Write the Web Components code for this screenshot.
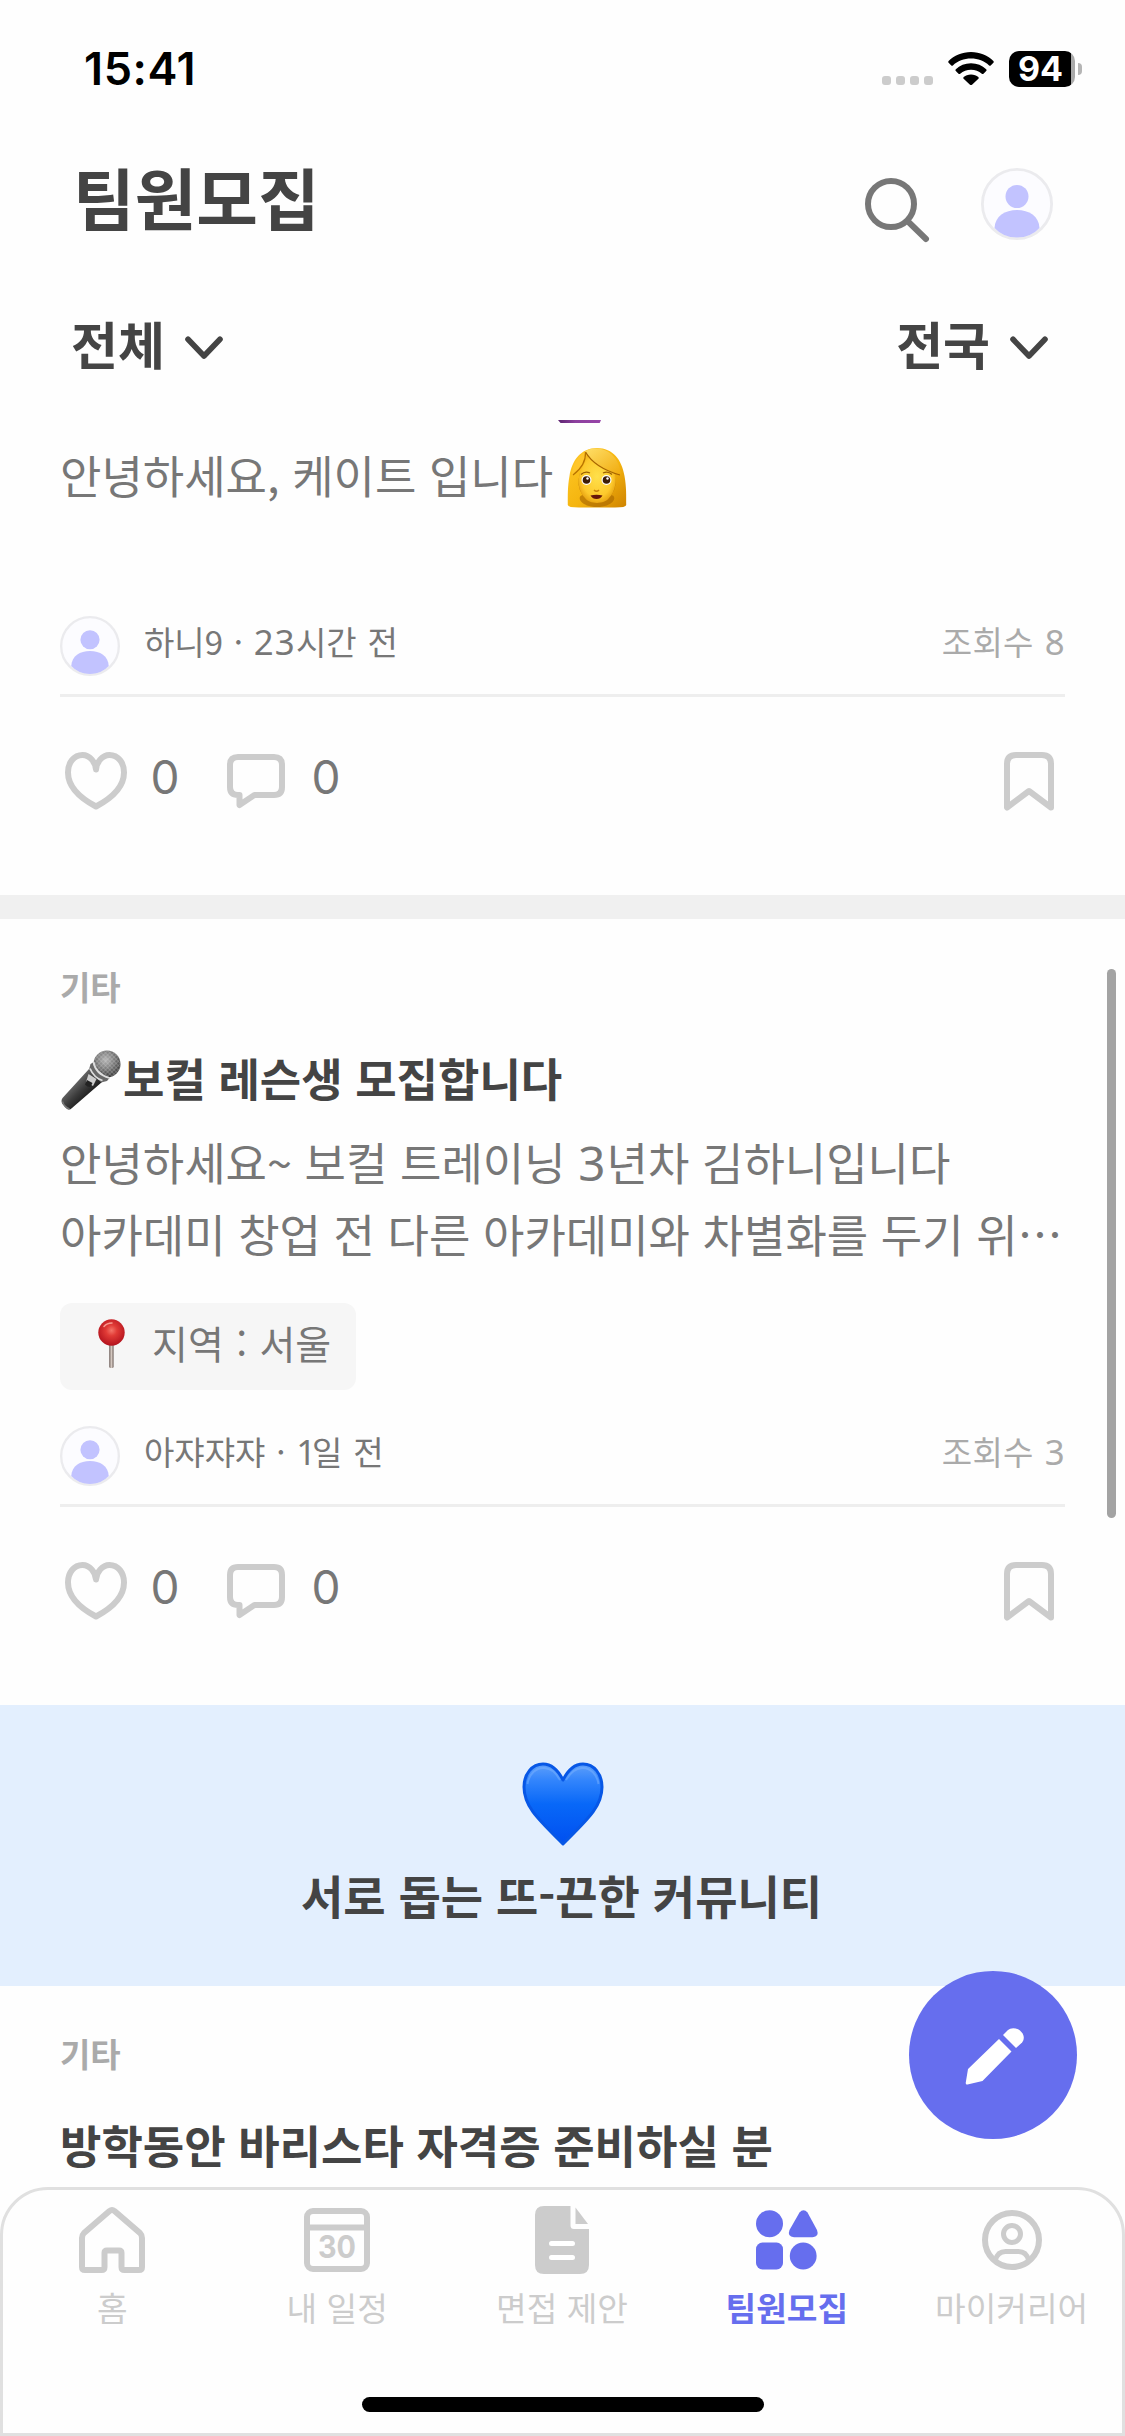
<!DOCTYPE html>
<html lang="ko">
<head>
<meta charset="utf-8">
<title>팀원모집</title>
<style>
  html, body { margin: 0; padding: 0; background: #fefefe; }
  body { width: 1125px; height: 2436px; overflow: hidden; font-family: "Noto Sans CJK KR", sans-serif; color: #444; }
</style>
</head>
<body>
<recruit-app></recruit-app>
<script>
const define = (name, html, setup) => {
  const tpl = document.createElement('template');
  tpl.innerHTML = html;
  customElements.define(name, class extends HTMLElement {
    constructor() {
      super();
      this.attachShadow({ mode: 'open' }).append(tpl.content.cloneNode(true));
    }
    connectedCallback() { if (setup) setup.call(this, this.shadowRoot); }
  });
};

const ICONS = {
  dots: [51, 9, '<g fill="#ccc"><rect width="9" height="9" rx="3"/><rect x="14" width="9" height="9" rx="3"/><rect x="28" width="9" height="9" rx="3"/><rect x="42" width="9" height="9" rx="3"/></g>'],
  wifi: [46, 33, '<g fill="#000"><path d="M23 0C14 0 6 3.500 .6 8.900q-.9.900 0 1.800L3.300 13.400q.8.800 1.600 0C9.600 9 16 6.600 23 6.600S36.400 9 41.100 13.400q.8.800 1.600 0L45.400 10.700q.9-.9 0-1.800C40 3.500 32 0 23 0Z"/><path d="M23 11.300c-6 0-11.300 2.200-15.200 5.900q-.9.900 0 1.800l2.700 2.700q.8.800 1.700 0C15.100 19.200 18.900 17.800 23 17.800s7.900 1.400 10.800 3.900q.9.800 1.700 0l2.700-2.700q.9-.9 0-1.800C34.300 13.500 29 11.300 23 11.300Z"/><path d="M23 22.500c-3 0-5.500 1-7.300 2.500q-1 .9-.1 1.800l6.400 5.900q1 .7 2 0l6.400-5.900q.9-.9-.1-1.800C28.500 23.500 26 22.500 23 22.500Z"/></g>'],
  search: [66, 66, '<g fill="none" stroke="#777" stroke-linecap="round"><circle cx="26" cy="26" r="23" stroke-width="6"/><path d="M43 43.500 61 61" stroke-width="6"/></g>'],
  chevron: [38, 24, '<path d="M3 3.300 19 20 35 3.300" fill="none" stroke="#444" stroke-width="5.600" stroke-linecap="round" stroke-linejoin="round"/>'],
  like: [62, 58, '<path d="M31 17.500C30.500 10.500 25 3 17.500 3 9 3 3 10.500 3 20.500 3 34 14 45.500 31 54.500 48 45.500 59 34 59 20.500 59 10.500 53 3 44.500 3 37 3 31.500 10.500 31 17.500Z" fill="none" stroke="#ccc" stroke-width="6" stroke-linejoin="round"/>'],
  comment: [58, 54, '<path d="M11 3H47Q55 3 55 11V33Q55 41 47 41H27.500L12.500 51V41H11Q3 41 3 33V11Q3 3 11 3Z" fill="none" stroke="#ccc" stroke-width="6" stroke-linejoin="round"/>'],
  bookmark: [50, 59, '<path d="M12 3H38Q47 3 47 12V55.500L25 39 3 55.500V12Q3 3 12 3Z" fill="none" stroke="#ccc" stroke-width="6" stroke-linejoin="round"/>'],
  pencil: [60, 60, '<g fill="#fff"><path d="M34 13 46.500 25.500 17.500 55 2.500 58.500Q.8 59 .7 57L3 43Z"/><path d="M38 9 42.500 4.500C50-3 65 9 56 17.500L51 22Z"/></g>'],
  home: [66, 66, '<path d="M6 63Q3 63 3 60V31Q3 28 5 26L30.500 4Q33 2 35.500 4L61 26Q63 28 63 31V60Q63 63 60 63H45.500Q42.500 63 42.500 60V46Q42.500 43.500 40 43.500H28Q25.500 43.500 25.500 46V60Q25.500 63 22.500 63Z" fill="none" stroke="#ccc" stroke-width="6" stroke-linejoin="round"/>'],
  calendar: [66, 64, '<rect x="3" y="3" width="60" height="58" rx="6" fill="none" stroke="#ccc" stroke-width="6"/><path d="M3 19.500H63" stroke="#ccc" stroke-width="6"/><text x="33" y="49.500" text-anchor="middle" textLength="38" lengthAdjust="spacingAndGlyphs" font-family="Inter, sans-serif" font-weight="700" font-size="31" fill="#ccc">30</text>'],
  document: [54, 68, '<path d="M9 0H35.500V19.500Q35.500 23 39 23H54V59Q54 68 45 68H9Q0 68 0 59V9Q0 0 9 0Z" fill="#ccc"/><path d="M40.500 1.500 53 18H40.500Z" fill="#ccc"/><path d="M16.500 37.500H37.500M16.500 51.500H37.500" stroke="#fff" stroke-width="5" stroke-linecap="round"/>'],
  shapes: [62, 60, '<g fill="#666eee"><circle cx="13.500" cy="13.700" r="13.500"/><path d="M43.500 2.500Q47.500-2 51.500 2.500L61 20Q63.500 26.800 56.500 27.200H38Q31 26.800 33.500 20Z"/><rect y="32.500" width="27" height="27" rx="6.500"/><circle cx="47.200" cy="46" r="13.400"/></g>'],
  person: [60, 60, '<g fill="none" stroke="#ccc"><circle cx="30" cy="30" r="27" stroke-width="6"/><circle cx="30" cy="24" r="8.500" stroke-width="5"/><path d="M13.500 50C15 44 18 41.500 23.500 41.500H36.500C42 41.500 45 44 46.500 50" stroke-width="5"/></g>'],
  blueheart: [82, 84, '<defs><linearGradient id="b" x1="0" y1="0" x2="0" y2="1"><stop offset="0" stop-color="#5fa0fa"/><stop offset=".2" stop-color="#3385fc"/><stop offset=".5" stop-color="#0868f8"/><stop offset="1" stop-color="#004ff0"/></linearGradient></defs><path d="M41 18C36 8 29 2 21 2 10 2 2 12 2 25 2 45 17 58 41 82 65 58 80 45 80 25 80 12 72 2 61 2 53 2 46 8 41 18Z" fill="url(#b)" stroke="#0757e6" stroke-width="3" stroke-linejoin="round"/><path d="M5.500 22C7 12 14 5.500 22 6 30 6.500 34 11 38 18" fill="none" stroke="#80b5ff" stroke-width="2" opacity=".45"/><path d="M44 18C48 11 53 6.500 60 6 68 5.500 75 12 76.500 22" fill="none" stroke="#80b5ff" stroke-width="2" opacity=".45"/>'],
  pin: [27, 50, '<defs><radialGradient id="r" cx=".5" cy=".42" r=".6"><stop offset="0" stop-color="#f47468"/><stop offset=".35" stop-color="#e13b36"/><stop offset="1" stop-color="#b0101c"/></radialGradient><linearGradient id="n"><stop offset="0" stop-color="#6d5f5a"/><stop offset=".5" stop-color="#d8ccc4"/><stop offset="1" stop-color="#6d5f5a"/></linearGradient></defs><rect x="11.200" y="24" width="4.400" height="25" rx="1.500" fill="url(#n)"/><circle cx="13.500" cy="13.500" r="13.200" fill="url(#r)"/><path d="M6 7.500Q9 4 14 4" fill="none" stroke="#ffb3a6" stroke-width="1.500" stroke-linecap="round" opacity=".8"/>'],
  mic: [60, 60, '<defs><linearGradient id="m" x1="0" y1="0" x2="1" y2="1"><stop offset=".3" stop-color="#6e6e6e"/><stop offset=".5" stop-color="#3c3c3c"/><stop offset=".7" stop-color="#161616"/></linearGradient><radialGradient id="h" cx=".45" cy=".35" r=".7"><stop offset="0" stop-color="#b5b5b5"/><stop offset=".5" stop-color="#777"/><stop offset="1" stop-color="#2c2c2c"/></radialGradient><pattern id="g" width="3" height="3" patternUnits="userSpaceOnUse" patternTransform="rotate(45)"><path d="M0 0H3M0 0V3" stroke="#ddd" stroke-width=".8" opacity=".6"/></pattern></defs><path d="M28 19 41 32 11 58Q8 61 5 58L1.500 54Q-.5 51 1.500 48Z" fill="url(#m)"/><path d="M1.500 51.500Q3 57 8.500 59" fill="none" stroke="#777" stroke-width="1.500"/><circle cx="46" cy="14" r="13.500" fill="url(#h)"/><circle cx="46" cy="14" r="13.500" fill="url(#g)"/><path d="M32 12.500Q34 24 48.500 28L46 31 40 32.500 28 19.500 29.500 14Z" fill="#686868"/><path d="M32.500 12Q34.500 24 48.500 28M29 18.500Q33 28 41.500 30.500" fill="none" stroke="#ddd" stroke-width="1.800"/><path d="M27.500 24 35.500 29 32 36 25 32Z" fill="#ccc"/><path d="M26 30 31.500 33 29.500 37Q26 37 24 34.500Z" fill="#222"/>'],
  woman: [60, 60, '<defs><linearGradient id="w" x1="0" y1="0" x2="1" y2="1"><stop offset="0" stop-color="#ffc928"/><stop offset=".55" stop-color="#f5b50f"/><stop offset="1" stop-color="#cf8300"/></linearGradient><radialGradient id="f" cx=".5" cy=".45" r=".6"><stop offset="0" stop-color="#ffe04b"/><stop offset=".7" stop-color="#fdc92c"/><stop offset="1" stop-color="#e39a0b"/></radialGradient><linearGradient id="t" x1="0" y1="0" x2="1" y2="1"><stop offset="0" stop-color="#ffdf68"/><stop offset="1" stop-color="#f0aa0c"/></linearGradient></defs><path d="M30 0C14 0 5 12 2.500 28 .5 39 .8 48 .8 57Q1 59.500 12 59.500H48Q59 59.500 59.200 57C59.200 48 59.500 39 57.500 28 55 12 46 0 30 0Z" fill="url(#w)"/><path d="M13 25Q9 38 15.500 47C9 49 14 59 30 59S51 49 44.500 47Q51 38 47 25Z" fill="#a96700" opacity=".65"/><path d="M14 22C10 31 11 43 18 50 23 56.500 37 56.500 42 50 49 43 50 31 47 23 35 22 26 14 20 7 18 14 16 18 14 22Z" fill="url(#f)"/><path d="M18 3.500C26 17 39 22 54 27 53 13 44 1 30 .5 25 .3 21 1.500 18 3.500Z" fill="url(#t)"/><path d="M18.500 4C18 16 11 22 5 27 5 18 10 8 18.500 4Z" fill="#ffc62b"/><path d="M18.500 4C26 17 39 23 53 27" fill="none" stroke="#a86500" stroke-width="1.300"/><path d="M18.500 4C19 14 14 21 6 27" fill="none" stroke="#b87300" stroke-width="1.200"/><ellipse cx="19.500" cy="32" rx="5" ry="5" fill="#fff"/><ellipse cx="39.500" cy="32" rx="5" ry="5" fill="#fff"/><circle cx="19.500" cy="32" r="3.800" fill="#3d1e08"/><circle cx="39.500" cy="32" r="3.800" fill="#3d1e08"/><circle cx="20.500" cy="30.500" r="1.200" fill="#fff"/><circle cx="40.500" cy="30.500" r="1.200" fill="#fff"/><path d="M14 26.500Q18 22.500 23 25M36 25Q41 22.500 45 26.500" fill="none" stroke="#9a6000" stroke-width="1.300"/><path d="M27 42Q29.500 44.500 32 42" fill="none" stroke="#c7830b" stroke-width="1.500"/><path d="M23.500 47.500Q29.500 46.200 35.500 47.500 33.500 51 29.500 51T23.500 47.500Z" fill="#66160a"/>']
};

define('ui-icon', '<style>:host{display:block;flex:none}svg{display:block;overflow:visible}</style><div></div>', function (root) {
  const [w, h, body] = ICONS[this.getAttribute('name')];
  root.querySelector('div').innerHTML = `<svg width="${w}" height="${h}" viewBox="0 0 ${w} ${h}" aria-hidden="true">${body}</svg>`;
});

define('user-avatar', `
  <style>:host{display:block;flex:none;width:60px;height:60px}svg{display:block;width:100%;height:100%}</style>
  <svg viewBox="0 0 72 72"><clipPath id="c"><circle cx="36" cy="36" r="34"/></clipPath>
  <circle cx="36" cy="36" r="34.600" fill="#fcfcff" stroke="#ebebee" stroke-width="2.800"/>
  <g fill="#c2c3ff" clip-path="url(#c)"><circle cx="36" cy="28.500" r="11.500"/><path d="M13.500 60C14 48 24 42 36 42S58 48 58.500 60Q50 69.500 36 69.500T13.500 60Z"/></g></svg>`);

define('status-bar', `
  <style>
    :host{display:flex;height:138px;box-sizing:border-box;padding:46px 43px 0 84px;align-items:flex-start;justify-content:space-between;font-family:Inter,sans-serif;color:#000}
    .time{font-size:45px;font-weight:600;line-height:46px;letter-spacing:.6px}
    .right{display:flex;align-items:flex-start}
    .dots{padding-top:30px;margin-right:15px}.wifi{padding-top:6px;margin-right:15px}
    .battery{margin-top:5px;width:66px;height:36px;border-radius:10px;background:linear-gradient(90deg,#000 62px,#aaa 62px);color:#fff;font-size:34px;line-height:36px;font-weight:700;text-align:center;text-indent:-3px}
    .nub{margin:17px 0 0 3px;width:4px;height:12px;border-radius:0 4px 4px 0;background:#b5b5b5}
  </style>
  <div class="time">15:41</div>
  <div class="right"><ui-icon class="dots" name="dots"></ui-icon><ui-icon class="wifi" name="wifi"></ui-icon><div class="battery">94</div><div class="nub"></div></div>`);

define('page-header', `
  <style>
    :host{display:flex;height:132px;box-sizing:border-box;padding:0 72px 0 73px;justify-content:space-between}
    h1{margin:0;padding-top:10px;font-size:67px;line-height:96px;font-weight:700;white-space:nowrap}
    .tools{display:flex;padding-top:30px}
    ui-icon{margin:10px 50px 0 0}user-avatar{width:72px;height:72px}
  </style>
  <h1><slot></slot></h1>
  <div class="tools"><ui-icon name="search"></ui-icon><user-avatar></user-avatar></div>`);

define('filter-bar', `
  <style>:host{display:flex;height:150px;box-sizing:border-box;padding:35px 77px 0 71px;justify-content:space-between}</style><slot></slot>`);
define('filter-select', `
  <style>:host{display:flex;height:76px;font-size:51px;line-height:76px;font-weight:700;gap:20px}ui-icon{margin-top:31px}</style>
  <span><slot></slot></span><ui-icon name="chevron"></ui-icon>`);

define('region-chip', `
  <style>:host{display:flex;box-sizing:border-box;width:296px;height:87px;margin-top:33px;border-radius:12px;background:#f6f6f6;padding-left:38px;font-size:39px;line-height:78px;color:#777;white-space:nowrap;word-spacing:1.500px}
  ui-icon{margin:16px 27px 0 0}</style><ui-icon name="pin"></ui-icon><slot></slot>`);

define('num-text', `
  <style>:host{font-family:"Noto Sans",sans-serif;font-size:1.055em;line-height:0}:host([narrow]){letter-spacing:-4px}:host([wide]){letter-spacing:1.200px}</style><slot></slot>`);

define('post-meta', `
  <style>:host{display:flex;height:81px;box-sizing:border-box;border-bottom:3px solid #eee;font-size:33px;line-height:50px;color:#777;word-spacing:1.500px;white-space:nowrap}
  .who{margin-left:24px;flex:1}.views{color:#aaa;letter-spacing:.3px}</style>
  <user-avatar></user-avatar><div class="who"><slot></slot></div><div class="views"><slot name="views"></slot></div>`);

define('post-actions', `
  <style>:host{display:flex;height:198px;box-sizing:border-box;padding:55px 11px 0 5px;font-size:46px;line-height:50px;color:#777;font-family:Inter,sans-serif}
  span{width:26px;display:flex;justify-content:center}.n1{margin:0 49px 0 25px}.n2{margin:0 auto 0 28px}.c{margin-top:2px}</style>
  <ui-icon name="like"></ui-icon><span class="n1">0</span><ui-icon class="c" name="comment"></ui-icon><span class="n2">0</span><ui-icon name="bookmark"></ui-icon>`);

define('post-card', `
  <style>:host{display:block;padding:0 60px}
  .cat{font-size:33px;line-height:50px;font-weight:700;color:#aaa}
  .title{font-size:45px;line-height:66px;font-weight:700;white-space:nowrap}
  .text{font-size:45px;line-height:72px;color:#777;white-space:nowrap}
  ::slotted([slot=cat]){display:block;padding-top:42px}
  ::slotted([slot=title]){display:flex;margin-top:34px;align-items:flex-start}</style>
  <div class="cat"><slot name="cat"></slot></div>
  <div class="title"><slot name="title"></slot></div>
  <div class="text"><slot name="text"></slot></div>
  <slot></slot>`);

define('community-banner', `
  <style>:host{display:flex;flex-direction:column;align-items:center;height:281px;box-sizing:border-box;padding-top:57px;background:#e3effe;font-size:46px;font-weight:700;line-height:70px;white-space:nowrap}
  div{margin:13px 2px 0 0}</style><ui-icon name="blueheart"></ui-icon><div><slot></slot></div>`);

define('write-button', `
  <style>:host{position:absolute;left:909px;top:1971px;width:168px;height:168px;border-radius:50%;background:#666eee;display:flex;align-items:center;justify-content:center}
  ui-icon{margin:2px 0 0 4px}</style><ui-icon name="pencil"></ui-icon>`);

define('nav-item', `
  <style>:host{display:flex;flex-direction:column;align-items:center;flex:1;font-size:33.300px;line-height:48px;color:#ccc;font-weight:400;white-space:nowrap}
  :host([active]){color:#666eee;font-weight:700}
  .i{height:72px;display:flex;align-items:center;margin-bottom:7px}</style>
  <div class="i"></div><slot></slot>`, function (root) {
  const icon = document.createElement('ui-icon');
  icon.setAttribute('name', this.getAttribute('icon'));
  root.querySelector('.i').replaceChildren(icon);
});

define('bottom-nav', `
  <style>:host{display:flex;flex-direction:column;align-items:center;box-sizing:border-box;height:249px;border:3px solid #e0e0e0;border-radius:48px 48px 0 0;background:#fefefe;flex:none}
  nav{display:flex;width:1125px;height:207px;box-sizing:border-box;padding:14px 1px 0 0}
  .bar{width:402px;height:15px;border-radius:8px;background:#000}</style>
  <nav><slot></slot></nav><div class="bar"></div>`);

customElements.define('recruit-app', class extends HTMLElement {
  constructor() {
    super();
    this.attachShadow({ mode: 'open' }).innerHTML = `
    <style>
      :host{display:flex;flex-direction:column;position:relative;width:1125px;height:2436px;overflow:hidden}
      .feed{height:1767px;overflow:hidden}
      .sep{height:24px;background:#f0f0f0}
      .peek{height:3px;padding-left:498px}.peek i{display:block;width:43px;height:3px;background:linear-gradient(90deg,#5d2470,#8c409e 40%,#9745a8);clip-path:polygon(0 0,100% 0,97% 100%,6% 100%)}
      .hello{display:flex;padding-top:16px;margin-bottom:105px}
      .hello ui-icon{margin:9px 0 0 14px}
      .title ui-icon{margin:5px 2px 0 1px}
      .intro{padding-top:15px}
      .m2{margin-top:36px}
      .thumb{position:absolute;left:1107px;top:969px;width:9px;height:549px;border-radius:5px;background:#a3a3a3}
      p{margin:0}
    </style>
    <status-bar></status-bar>
    <page-header>팀원모집</page-header>
    <filter-bar><filter-select>전체</filter-select><filter-select>전국</filter-select></filter-bar>
    <div class="feed">
      <post-card>
        <div slot="text"><div class="peek"><i></i></div><div class="hello"><span>안녕하세요, 케이트 입니다</span><ui-icon name="woman"></ui-icon></div></div>
        <post-meta>하니9 · <num-text wide>23</num-text>시간 전<span slot="views">조회수 <num-text>8</num-text></span></post-meta>
        <post-actions></post-actions>
      </post-card>
      <div class="sep"></div>
      <post-card>
        <span slot="cat">기타</span>
        <div slot="title" class="title"><ui-icon name="mic"></ui-icon><span>보컬 레슨생 모집합니다</span></div>
        <div slot="text" class="intro"><p>안녕하세요~ 보컬 트레이닝 <num-text wide>3</num-text>년차 김하니입니다</p><p>아카데미 창업 전 다른 아카데미와 차별화를 두기 위…</p></div>
        <region-chip>지역 : 서울</region-chip>
        <post-meta class="m2">아쟈쟈쟈 · <num-text narrow>1</num-text>일 전<span slot="views">조회수 <num-text>3</num-text></span></post-meta>
        <post-actions></post-actions>
      </post-card>
      <community-banner>서로 돕는 뜨-끈한 커뮤니티</community-banner>
      <post-card>
        <span slot="cat">기타</span>
        <div slot="title">방학동안 바리스타 자격증 준비하실 분</div>
      </post-card>
    </div>
    <bottom-nav>
      <nav-item icon="home">홈</nav-item>
      <nav-item icon="calendar">내 일정</nav-item>
      <nav-item icon="document">면접 제안</nav-item>
      <nav-item icon="shapes" active>팀원모집</nav-item>
      <nav-item icon="person">마이커리어</nav-item>
    </bottom-nav>
    <div class="thumb"></div>
    <write-button></write-button>`;
  }
});
</script>
</body>
</html>
